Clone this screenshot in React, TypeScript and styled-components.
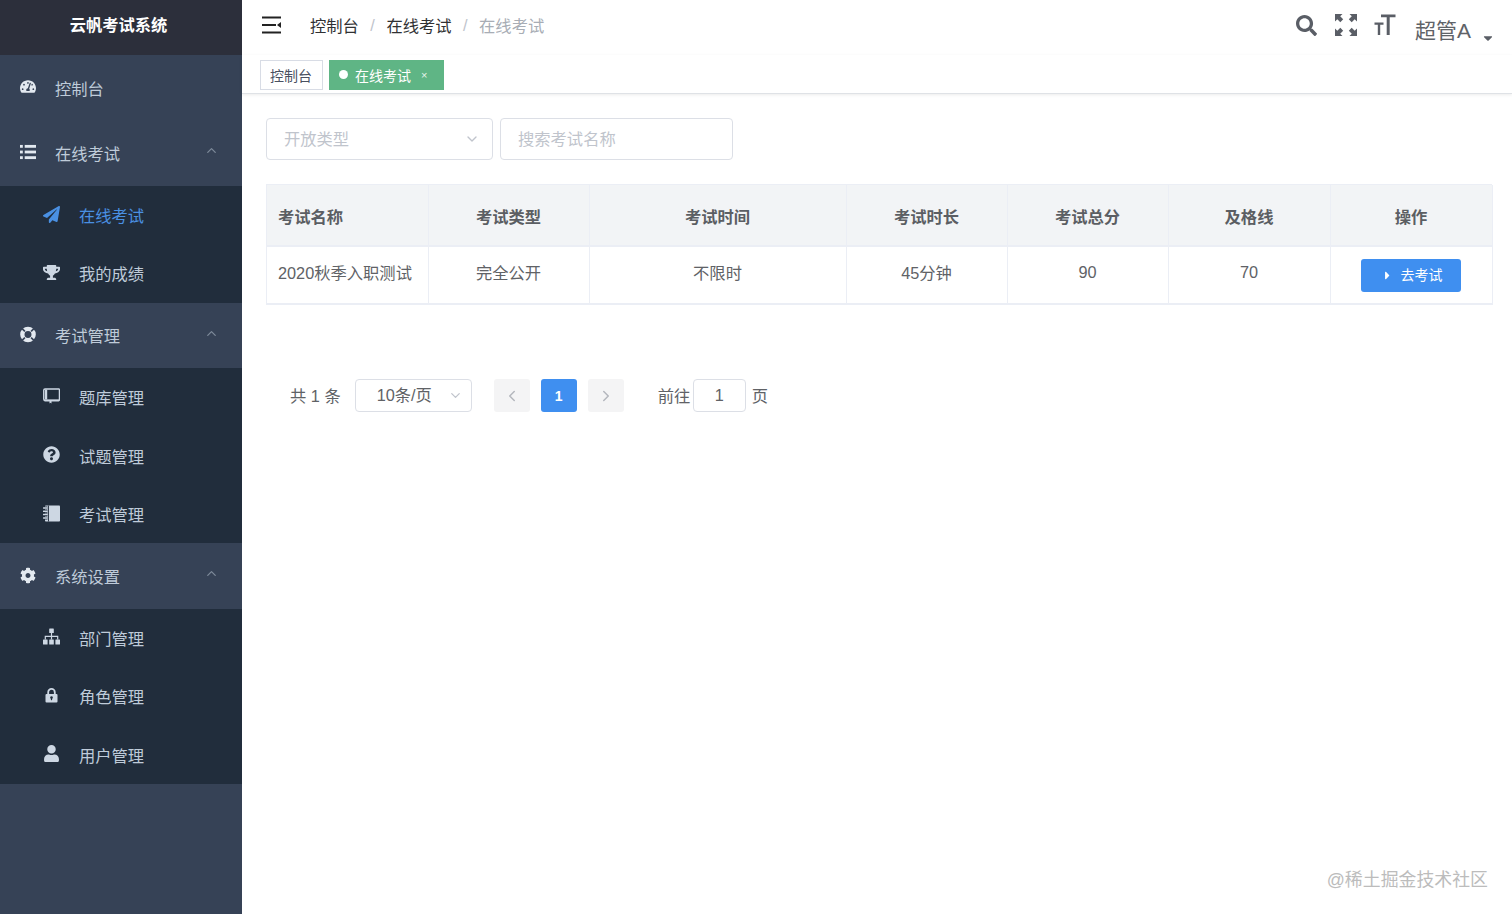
import React from 'react';
import styled, { createGlobalStyle } from 'styled-components';
import {
  FaTachometerAlt, FaPaperPlane, FaTrophy, FaQuestionCircle,
  FaCog, FaUser, FaSearch, FaCaretRight, FaCaretDown,
} from 'react-icons/fa';
import { LuChevronUp, LuChevronDown, LuChevronLeft, LuChevronRight } from 'react-icons/lu';

const Global = createGlobalStyle`
  html, body { margin: 0; padding: 0; height: 100%; background: #fff; }
  body { font-family: "Liberation Sans", "Noto Sans CJK SC", sans-serif; overflow: hidden; }
  * { box-sizing: border-box; }
`;

const Page = styled.div`display: flex; width: 1512px; height: 914px; position: relative; background: #fff;`;
const Sidebar = styled.aside`width: 242px; flex: none; background: #364256; display: flex; flex-direction: column;`;
const Logo = styled.div`height: 55px; background: #2c2f3b; color: #fff; font-size: 16.3px; font-weight: 700; display: flex; align-items: center; justify-content: center; padding: 0 5px 8px 0;`;
const MenuItem = styled.div`height: 65.4px; display: flex; align-items: center; padding-left: 20px; color: #bfcbd9; font-size: 16.3px; position: relative;`;
const MenuIcon = styled.span`width: 16px; height: 18px; margin-right: 19px; margin-top: -2px; display: flex; align-items: center; justify-content: center; color: #e3e9f0; font-size: 17px; flex: none;`;
const MenuArrow = styled.span`position: absolute; left: 204px; top: 23px; color: #7d8999; font-size: 15px; display: flex;`;
const SubGroup = styled.div`background: #212d3c;`;
const SubItem = styled.div<{ $active?: boolean }>`height: 58.45px; display: flex; align-items: center; padding-left: 43px; font-size: 16.3px; color: ${p => (p.$active ? '#4a90e2' : '#bfcbd9')};`;
const SubIcon = styled.span<{ $active?: boolean }>`width: 17px; height: 18px; margin-right: 19px; margin-top: -2px; display: flex; align-items: center; justify-content: center; font-size: 17px; flex: none; color: ${p => (p.$active ? '#4a90e2' : '#cdd7e3')};`;

const Main = styled.main`flex: 1; min-width: 0; display: flex; flex-direction: column;`;
const Navbar = styled.header`height: 55px; flex: none; display: flex; align-items: center; padding: 0 17px 0 20px; position: relative;`;
const Hamburger = styled.span`width: 19px; height: 18px; display: flex; margin-right: 29px; margin-top: -5px;`;
const Crumbs = styled.nav`display: flex; align-items: center; font-size: 16.3px; color: #303133; margin-top: -5px;`;
const CrumbSep = styled.span`color: #c0c4cc; margin: 0 11.5px;`;
const CrumbLast = styled.span`color: #a8adb5;`;
const NavRight = styled.div`margin-left: auto; display: flex; align-items: center; color: #5a5e66;`;
const NavIcon = styled.span`width: 22px; height: 22px; margin-right: 17.5px; margin-top: -5px; display: flex; align-items: center; justify-content: center; font-size: 21px;`;
const UserName = styled.span`font-size: 21px; color: #5f6368; margin-top: 3px; margin-left: 1px;`;
const Caret = styled.span`display: flex; font-size: 14px; margin-left: 10px; margin-top: 20px; color: #5a5e66;`;

const TagsBar = styled.div`height: 39px; flex: none; display: flex; align-items: flex-start; gap: 6px; padding: 5px 0 0 18px; border-bottom: 1px solid #dfe2e6; box-shadow: 0 1px 3px rgba(0,0,0,.08);`;
const Tag = styled.span<{ $active?: boolean }>`height: 30px; display: flex; align-items: center; font-size: 14px; padding: ${p => (p.$active ? '0 16px 1px 9px' : '0 10px 1px 9px')}; border: 1px solid ${p => (p.$active ? '#5fb585' : '#d8dce5')}; background: ${p => (p.$active ? '#5fb585' : '#fff')}; color: ${p => (p.$active ? '#fff' : '#495060')};`;
const TagDot = styled.i`width: 9px; height: 9px; border-radius: 50%; background: #fff; margin-right: 7px;`;
const TagClose = styled.span`font-size: 11px; margin-left: 10px; color: #e4f3ea;`;

const Content = styled.div`padding: 24px 20px 0 24px;`;
const Filters = styled.div`display: flex; gap: 7px; margin-bottom: 24px;`;
const Field = styled.div<{ $w: number }>`width: ${p => p.$w}px; height: 42px; border: 1px solid #dcdfe6; border-radius: 4px; display: flex; align-items: center; padding: 0 12px 0 17px; color: #c0c4cc; font-size: 16.3px; justify-content: space-between;`;
const FieldLabel = styled.span`margin-top: -3px;`;
const FieldArrow = styled.span`display: flex; color: #c0c4cc; font-size: 16px;`;

const Table = styled.div`display: grid; grid-template-columns: 162px 161px 257px 161px 161px 162px 162px; border: 1px solid #ebeef5; border-right: 0; border-bottom: 0; width: 1226px;`;
const Th = styled.div<{ $left?: boolean }>`height: 62px; background: #f2f4f6; border-right: 1px solid #ebeef5; border-bottom: 2px solid #ebeef5; display: flex; align-items: center; justify-content: ${p => (p.$left ? 'flex-start' : 'center')}; padding: 2px 12px 0 11px; font-size: 16.3px; font-weight: 700; color: #5b5e63;`;
const Td = styled.div<{ $left?: boolean; $action?: boolean }>`height: 58px; border-right: 1px solid #ebeef5; border-bottom: 2px solid #ebeef5; display: flex; align-items: center; justify-content: ${p => (p.$left ? 'flex-start' : 'center')}; padding: ${p => (p.$action ? '0 13px 0 11px' : '0 12px 6px 11px')}; font-size: 16.3px; color: #606266; white-space: nowrap;`;
const GoButton = styled.button`width: 100px; height: 33px; border: 0; border-radius: 3px; background: #3f8ff0; color: #fff; font: inherit; font-size: 14px; display: flex; align-items: center; justify-content: center; gap: 7px; padding: 0 0 2px 2px;`;
const GoIcon = styled.span`display: flex; font-size: 13px; margin-top: 2px;`;

const Pager = styled.div`display: flex; align-items: center; height: 33px; flex: none; margin-top: 74px; padding-left: 48px; font-size: 16.3px; color: #606266;`;
const PagerText = styled.span<{ $ml?: number }>`margin-left: ${p => p.$ml ?? 0}px; margin-top: -2px; white-space: nowrap;`;
const SizeSelect = styled.div`width: 117px; height: 33px; margin-left: 14px; border: 1px solid #dcdfe6; border-radius: 4px; display: flex; align-items: center; justify-content: space-between; padding: 0 8px 0 21px;`;
const SizeLabel = styled.span`margin-top: -3px;`;
const SizeArrow = styled.span`display: flex; color: #c0c4cc; font-size: 15px;`;
const PageBtn = styled.div<{ $active?: boolean; $ml: number }>`width: 36px; height: 33px; margin-left: ${p => p.$ml}px; border-radius: 3px; display: flex; align-items: center; justify-content: center; font-size: ${p => (p.$active ? 14 : 18)}px; font-weight: 700; background: ${p => (p.$active ? '#3f8ff0' : '#f4f4f5')}; color: ${p => (p.$active ? '#fff' : '#b4b7bd')};`;
const PageInput = styled.div`width: 53px; height: 33px; margin-left: 2.5px; border: 1px solid #dcdfe6; border-radius: 4px; display: flex; align-items: center; justify-content: center;`;
const Watermark = styled.div`position: absolute; right: 24px; top: 867px; font-size: 17.9px; line-height: 26px; color: #bcbcbc; white-space: nowrap;`;

const ListIcon = () => (
  <svg width="17" height="16" viewBox="0 0 17 16" fill="currentColor">
    <rect x="0" y="0.5" width="3" height="3" />
    <rect x="5" y="0.5" width="12" height="3" />
    <rect x="0" y="6.5" width="3" height="3" />
    <rect x="5" y="6.5" width="12" height="3" />
    <rect x="0" y="12.5" width="3" height="3" />
    <rect x="5" y="12.5" width="12" height="3" />
  </svg>
);
const RingIcon = () => (
  <svg width="17" height="17" viewBox="0 0 17 17" fill="none">
    <circle cx="8.5" cy="8.5" r="6" stroke="currentColor" strokeWidth="4.6" />
    <path d="M2.2 2.2l3 3M14.8 2.2l-3 3M2.2 14.8l3-3M14.8 14.8l-3-3" stroke="#364256" strokeWidth="1.7" />
  </svg>
);
const BookIcon = () => (
  <svg width="17" height="16" viewBox="0 0 17 16" fill="none">
    <path d="M2 1h13.8a.6.6 0 0 1 .6.6v10.200a.6.6 0 0 1-.6.6H2a1.3 1.3 0 0 1-1.3-1.3V2.3A1.3 1.3 0 0 1 2 1z" stroke="currentColor" strokeWidth="1.3" />
    <path d="M3 1.5v10" stroke="currentColor" strokeWidth="2.4" />
    <path d="M.6 11.5h15.8v1.200a.8.8 0 0 1-.8.8H8.5v2l-1-.8-1 .8v-2H2a1.4 1.4 0 0 1-1.4-1.4z" fill="currentColor" />
  </svg>
);
const NotebookIcon = () => (
  <svg width="17" height="17" viewBox="0 0 17 17" fill="currentColor">
    <rect x="2" y="0.5" width="15" height="16" rx="0.8" />
    <path d="M5.5 0.5v16" stroke="#212d3c" strokeWidth="0.9" />
    <path d="M0.5 3h4M0.5 6.3h4M0.5 9.6h4M0.5 13h4" stroke="#212d3c" strokeWidth="2.8" />
    <path d="M0.5 3h3.6M0.5 6.3h3.6M0.5 9.6h3.6M0.5 13h3.6" stroke="currentColor" strokeWidth="1.5" strokeLinecap="round" />
  </svg>
);
const SitemapIcon = () => (
  <svg width="17" height="17" viewBox="0 0 17 17" fill="currentColor">
    <rect x="6.2" y="0.5" width="4.6" height="4.6" rx="0.4" />
    <rect x="0" y="11.5" width="4.6" height="5" rx="0.5" />
    <rect x="6.2" y="11.5" width="4.6" height="5" rx="0.5" />
    <rect x="12.4" y="11.5" width="4.6" height="5" rx="0.5" />
    <path d="M8.5 5v6.5M2.3 11.5V8.3h12.4v3.2" fill="none" stroke="currentColor" strokeWidth="1.2" />
  </svg>
);
const LockIcon = () => (
  <svg width="13" height="15" viewBox="0 0 13 15" fill="none">
    <path d="M3.2 7V4.200a3.3 3.3 0 0 1 6.600 0V7" stroke="currentColor" strokeWidth="1.8" />
    <rect x="0.5" y="6" width="12" height="8.5" rx="1" fill="currentColor" />
    <circle cx="6.5" cy="9.6" r="1.3" fill="#212d3c" />
    <path d="M6.5 9.8v2.4" stroke="#212d3c" strokeWidth="1.2" />
  </svg>
);
const HamburgerIcon = () => (
  <svg width="19" height="18" viewBox="0 0 19 18" fill="#222">
    <rect x="0" y="0.5" width="19" height="2" />
    <rect x="0" y="8" width="14" height="2" />
    <rect x="0" y="15.5" width="19" height="2" />
    <path d="M19 6v6l-4-3z" />
  </svg>
);
const FullscreenIcon = () => (
  <svg width="22" height="22" viewBox="0 0 22 22" fill="currentColor">
    <path d="M0 0h7.5L5.2 2.3l3 3-2.9 2.9-3-3L0 7.5zM22 0v7.5l-2.3-2.3-3 3-2.9-2.9 3-3L14.5 0zM0 22v-7.5l2.3 2.3 3-3 2.9 2.9-3 3L7.5 22zM22 22h-7.5l2.3-2.3-3-3 2.9-2.9 3 3 2.3-2.3z" />
  </svg>
);
const TextSizeIcon = () => (
  <svg width="22" height="22" viewBox="0 0 22 22" fill="currentColor">
    <path d="M7 0.5h14.5v2.8h-5.800V21h-3V3.3H7z" />
    <path d="M0.5 8.5h9v2.200H6.200V21H3.800V10.700H0.5z" />
  </svg>
);

type Sub = { icon: React.ReactNode; label: string; active?: boolean };
const groups: { icon: React.ReactNode; label: string; subs: Sub[] }[] = [
  { label: '在线考试', icon: <ListIcon />, subs: [
    { icon: <FaPaperPlane />, label: '在线考试', active: true },
    { icon: <FaTrophy />, label: '我的成绩' },
  ] },
  { label: '考试管理', icon: <RingIcon />, subs: [
    { icon: <BookIcon />, label: '题库管理' },
    { icon: <FaQuestionCircle />, label: '试题管理' },
    { icon: <NotebookIcon />, label: '考试管理' },
  ] },
  { label: '系统设置', icon: <FaCog />, subs: [
    { icon: <SitemapIcon />, label: '部门管理' },
    { icon: <LockIcon />, label: '角色管理' },
    { icon: <FaUser />, label: '用户管理' },
  ] },
];

const heads = ['考试名称', '考试类型', '考试时间', '考试时长', '考试总分', '及格线', '操作'];
const cells = ['2020秋季入职测试', '完全公开', '不限时', '45分钟', '90', '70'];

export default function App() {
  return (
    <Page>
      <Global />
      <Sidebar>
        <Logo>云帆考试系统</Logo>
        <MenuItem><MenuIcon><FaTachometerAlt /></MenuIcon>控制台</MenuItem>
        {groups.map(g => (
          <React.Fragment key={g.label}>
            <MenuItem>
              <MenuIcon>{g.icon}</MenuIcon>{g.label}
              <MenuArrow><LuChevronUp /></MenuArrow>
            </MenuItem>
            <SubGroup>
              {g.subs.map(s => (
                <SubItem key={s.label} $active={s.active}>
                  <SubIcon $active={s.active}>{s.icon}</SubIcon>{s.label}
                </SubItem>
              ))}
            </SubGroup>
          </React.Fragment>
        ))}
      </Sidebar>
      <Main>
        <Navbar>
          <Hamburger><HamburgerIcon /></Hamburger>
          <Crumbs>
            <span>控制台</span><CrumbSep>/</CrumbSep><span>在线考试</span><CrumbSep>/</CrumbSep><CrumbLast>在线考试</CrumbLast>
          </Crumbs>
          <NavRight>
            <NavIcon><FaSearch /></NavIcon>
            <NavIcon><FullscreenIcon /></NavIcon>
            <NavIcon><TextSizeIcon /></NavIcon>
            <UserName>超管A</UserName>
            <Caret><FaCaretDown /></Caret>
          </NavRight>
        </Navbar>
        <TagsBar>
          <Tag>控制台</Tag>
          <Tag $active><TagDot />在线考试<TagClose>×</TagClose></Tag>
        </TagsBar>
        <Content>
          <Filters>
            <Field $w={227}><FieldLabel>开放类型</FieldLabel><FieldArrow><LuChevronDown /></FieldArrow></Field>
            <Field $w={233}><FieldLabel>搜索考试名称</FieldLabel></Field>
          </Filters>
          <Table>
            {heads.map((h, i) => <Th key={h} $left={i === 0}>{h}</Th>)}
            {cells.map((c, i) => <Td key={c} $left={i === 0}>{c}</Td>)}
            <Td $action><GoButton><GoIcon><FaCaretRight /></GoIcon>去考试</GoButton></Td>
          </Table>
        </Content>
        <Pager>
          <PagerText>共 1 条</PagerText>
          <SizeSelect><SizeLabel>10条/页</SizeLabel><SizeArrow><LuChevronDown /></SizeArrow></SizeSelect>
          <PageBtn $ml={22}><LuChevronLeft /></PageBtn>
          <PageBtn $ml={11} $active>1</PageBtn>
          <PageBtn $ml={11}><LuChevronRight /></PageBtn>
          <PagerText $ml={34}>前往</PagerText>
          <PageInput>1</PageInput>
          <PagerText $ml={6}>页</PagerText>
        </Pager>
      </Main>
      <Watermark>@稀土掘金技术社区</Watermark>
    </Page>
  );
}
